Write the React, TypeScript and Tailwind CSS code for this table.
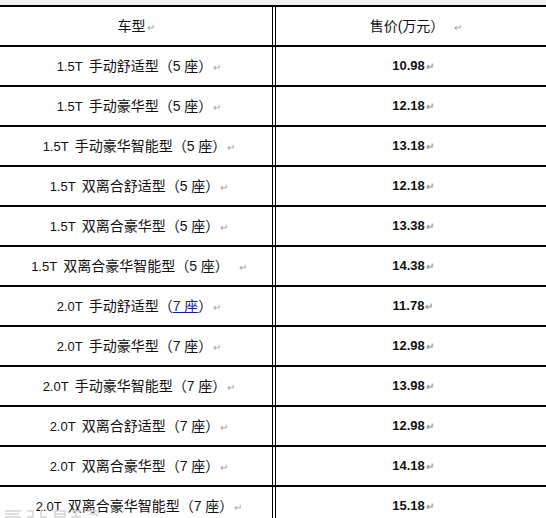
import React from 'react';

const rows: { name: string; price: string; link?: boolean; extra?: boolean }[] = [
  { name: '1.5T 手动舒适型（5 座）', price: '10.98' },
  { name: '1.5T 手动豪华型（5 座）', price: '12.18' },
  { name: '1.5T 手动豪华智能型（5 座）', price: '13.18' },
  { name: '1.5T 双离合舒适型（5 座）', price: '12.18' },
  { name: '1.5T 双离合豪华型（5 座）', price: '13.38' },
  { name: '1.5T 双离合豪华智能型（5 座）', price: '14.38', extra: true },
  { name: '2.0T 手动舒适型（', price: '11.78', link: true },
  { name: '2.0T 手动豪华型（7 座）', price: '12.98' },
  { name: '2.0T 手动豪华智能型（7 座）', price: '13.98' },
  { name: '2.0T 双离合舒适型（7 座）', price: '12.98' },
  { name: '2.0T 双离合豪华型（7 座）', price: '14.18' },
  { name: '2.0T 双离合豪华智能型（7 座）', price: '15.18' },
];

const Mark = ({ wide }: { wide?: boolean }) => (
  <span className={`text-[10px] text-[#a0a0a0] ${wide ? 'ml-[10px]' : 'ml-[1px]'}`}>↵</span>
);

function Row({ left, right }: { left: React.ReactNode; right: React.ReactNode }) {
  return (
    <div className="flex h-[40px] border-t-2 border-black">
      <div className="w-[272px] flex items-center justify-center">{left}</div>
      <div className="w-[4px] border-x border-black" />
      <div className="flex-1 flex items-center justify-center">{right}</div>
    </div>
  );
}

function Name({ r }: { r: (typeof rows)[number] }) {
  const [prefix, ...restParts] = r.name.split(' ');
  const rest = restParts.join(' ');
  return (
    <span className="text-[14px] ml-[6px]">
      <span className="text-[13px]">{prefix}</span>
      <span className="ml-[6px]">
        {rest}
        {r.link && (
          <>
            <span className="text-[#1a1aa6] underline">7 座</span>）
          </>
        )}
      </span>
      <Mark wide={r.extra} />
    </span>
  );
}

export default function App() {
  return (
    <div
      className="relative w-[546px] h-[518px] overflow-hidden bg-white text-[#111]"
      style={{ fontFamily: '"Liberation Sans", "Noto Sans CJK SC", sans-serif' }}
    >
      <div className="h-[5px] bg-[#f0f0f0]" />
      <Row
        left={<span className="text-[14px]">车型<Mark /></span>}
        right={<span className="text-[14px] ml-[10px]">售价(万元）<Mark wide /></span>}
      />
      {rows.map((r, i) => (
        <Row
          key={i}
          left={<Name r={r} />}
          right={
            <span className="text-[13px] font-bold ml-[4px]">
              {r.price}
              <Mark />
            </span>
          }
        />
      ))}
      <svg className="absolute left-[3px] bottom-0" width="100" height="9" viewBox="0 0 100 9">
        <g fill="none" stroke="#d4d4d4" strokeWidth="1.5">
          <path d="M2 2h16M2 5h14M2 8h16" />
          <path d="M24 2h6v6h-6" />
          <path d="M38 1v7h6" />
          <path d="M52 2h10v6h-10zM52 5h10" />
          <path d="M68 2h10M73 2v6M68 8h10" />
          <path d="M84 2h12M86 5h8v3" />
        </g>
      </svg>
    </div>
  );
}
